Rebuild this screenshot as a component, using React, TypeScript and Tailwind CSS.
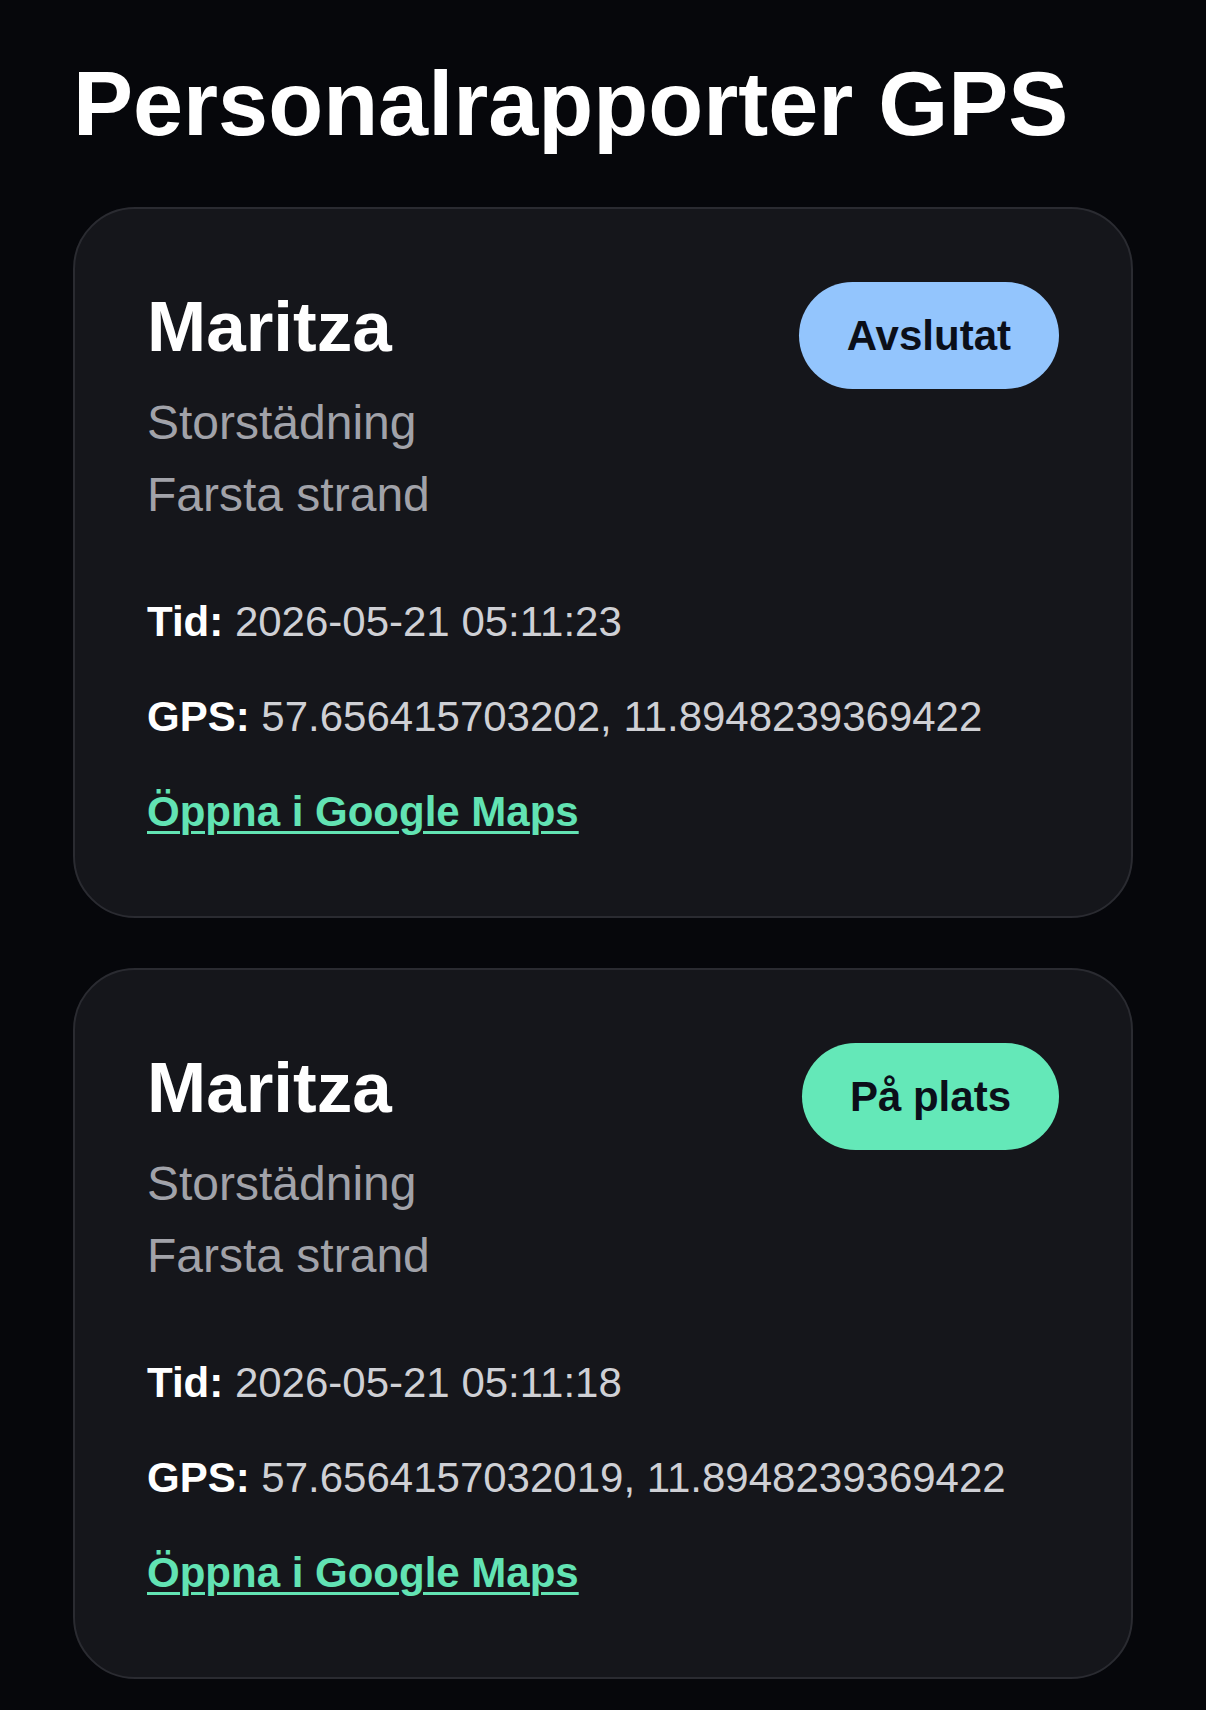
import React from "react";

interface Report {
  name: string;
  task: string;
  place: string;
  time: string;
  gps: string;
  status: "done" | "onsite";
}

const reports: Report[] = [
  {
    name: "Maritza",
    task: "Storstädning",
    place: "Farsta strand",
    time: "2026-05-21 05:11:23",
    gps: "57.656415703202, 11.8948239369422",
    status: "done",
  },
  {
    name: "Maritza",
    task: "Storstädning",
    place: "Farsta strand",
    time: "2026-05-21 05:11:18",
    gps: "57.6564157032019, 11.8948239369422",
    status: "onsite",
  },
];

const StatusBadge: React.FC<{ status: Report["status"] }> = ({ status }) => {
  const done = status === "done";
  return (
    <span
      className={
        done
          ? "mt-[1px] flex h-[107px] items-center rounded-full bg-[#93c5fd] px-[48px] text-[42px] font-bold text-[#0b0f19]"
          : "mt-[1px] flex h-[107px] items-center rounded-full bg-[#64e8b8] px-[48px] text-[42px] font-bold text-[#0b0f19]"
      }
    >
      {done ? "Avslutat" : "På plats"}
    </span>
  );
};

const ReportCard: React.FC<{ report: Report }> = ({ report }) => {
  return (
    <div className="rounded-[62px] border-2 border-[#2a2b31] bg-[#15161b] px-[72px] pt-[72px] pb-[80px]">
      <div className="flex items-start justify-between">
        <h2 className="text-[71px] font-bold leading-[91px] text-white">
          {report.name}
        </h2>
        <StatusBadge status={report.status} />
      </div>

      <div className="-mt-[2px] text-[48px] leading-[72px] text-[#a1a2a9]">
        <p>{report.task}</p>
        <p>{report.place}</p>
      </div>

      <div className="mt-[67px] flex flex-col gap-[47px] text-[42px] leading-[48px]">
        <p className="text-[#cfd0d5]">
          <span className="font-bold text-white">Tid:</span> {report.time}
        </p>
        <p className="text-[#cfd0d5]">
          <span className="font-bold text-white">GPS:</span> {report.gps}
        </p>
        <p>
          <a
            href="#"
            className="font-bold text-[#62e3b3] underline decoration-[3px] underline-offset-[5px]"
          >
            Öppna i Google Maps
          </a>
        </p>
      </div>
    </div>
  );
};

export default function App() {
  return (
    <div
      className="min-h-[1710px] bg-[#06070b] px-[73px] pt-[50px] pb-[40px]"
      style={{ fontFamily: '"Liberation Sans", Arial, sans-serif' }}
    >
      <h1 className="text-[90px] font-bold leading-[108px] text-white">
        Personalrapporter GPS
      </h1>
      <div className="mt-[49px] flex flex-col gap-[50px]">
        {reports.map((r, i) => (
          <ReportCard key={i} report={r} />
        ))}
      </div>
    </div>
  );
}
